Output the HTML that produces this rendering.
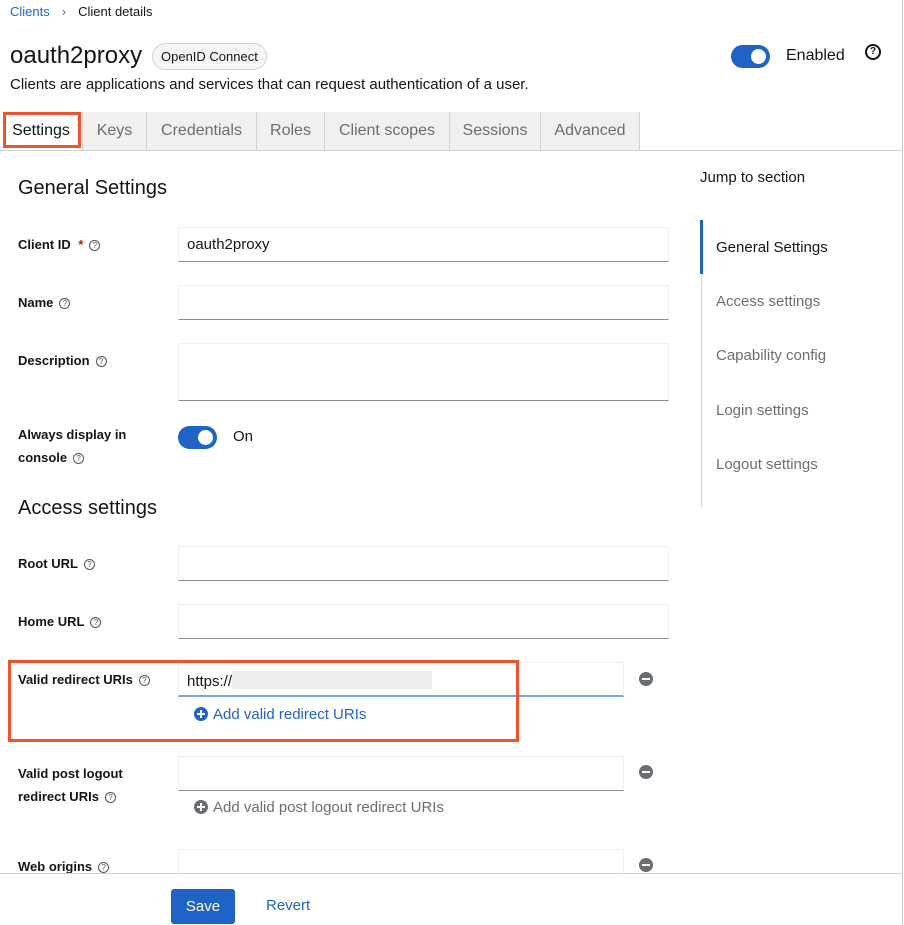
<!DOCTYPE html>
<html><head><style>
*{box-sizing:border-box}
body{margin:0;width:904px;height:925px;overflow:hidden;background:#fff;font-family:"Liberation Sans",sans-serif;color:#151515;position:relative}
.a{position:absolute}
.lbl{position:absolute;left:18px;font-size:13px;font-weight:bold;line-height:23px}
.q{display:inline-block;width:11px;height:11px;border:1px solid #555;border-radius:50%;font-size:8px;text-align:center;line-height:10px;font-weight:normal;margin-left:6px;vertical-align:1px;color:#555}
.in{position:absolute;left:178px;width:491px;height:35px;border:1px solid #f0f0f0;border-bottom:1px solid #8a8d90;font-size:15px;padding:8px}
.tab{position:absolute;top:112px;height:38px;font-size:16px;color:#6a6e73;text-align:center;line-height:38px;border-right:1px solid #d2d2d2;background:#f0f0f0}
.sw{position:absolute;width:39px;height:23px;border-radius:12px;background:#1f63c7}
.sw:after{content:"";position:absolute;right:4px;top:4px;width:15px;height:15px;border-radius:50%;background:#fff}
.nav{position:absolute;left:716px;font-size:15px;color:#6a6e73}
.minus{position:absolute;left:639px;width:14px;height:14px;border-radius:50%;background:#6a6e73}
.minus:after{content:"";position:absolute;left:3px;top:6px;width:8px;height:2px;background:#fff}
.plus{display:inline-block;width:14px;height:14px;border-radius:50%;position:relative;vertical-align:-2px;margin-right:5px}
.plus:before{content:"";position:absolute;left:3px;top:6px;width:8px;height:2px;background:#fff}
.plus:after{content:"";position:absolute;left:6px;top:3px;width:2px;height:8px;background:#fff}
</style></head><body>
<div class="a" style="right:1px;top:0;width:1px;height:925px;background:#c8c8c8"></div>
<div class="a" style="left:10px;top:4px;font-size:13px"><span style="color:#1f63c7">Clients</span><span style="color:#6a6e73;margin:0 12px">›</span>Client details</div>
<div class="a" style="left:10px;top:42px;font-size:24px">oauth2proxy</div>
<div class="a" style="left:152px;top:43px;height:27px;border:1px solid #d2d2d2;border-radius:14px;background:#f5f5f5;font-size:13px;line-height:25px;padding:0 8px">OpenID Connect</div>
<div class="a" style="left:10px;top:76px;font-size:15px">Clients are applications and services that can request authentication of a user.</div>
<div class="sw" style="left:731px;top:45px"></div>
<div class="a" style="left:786px;top:47px;font-size:16px">Enabled</div>
<div class="a" style="left:865px;top:44px;width:16px;height:16px;border:2px solid #151515;border-radius:50%;font-size:10px;font-weight:bold;text-align:center;line-height:12px">?</div>
<div class="a" style="left:0;top:112px;width:640px;height:38px;background:#f0f0f0"></div>
<div class="tab" style="left:0;width:83px;background:#fff;color:#151515">Settings</div>
<div class="tab" style="left:83px;width:64px">Keys</div>
<div class="tab" style="left:147px;width:110px">Credentials</div>
<div class="tab" style="left:257px;width:68px">Roles</div>
<div class="tab" style="left:325px;width:125px">Client scopes</div>
<div class="tab" style="left:450px;width:91px">Sessions</div>
<div class="tab" style="left:541px;width:99px">Advanced</div>
<div class="a" style="left:0;top:150px;width:902px;height:1px;background:#d2d2d2"></div>
<div class="a" style="left:3px;top:112px;width:78px;height:36px;border:3px solid #f0532f"></div>
<div class="a" style="left:18px;top:177px;font-size:20px">General Settings</div>
<div class="lbl" style="top:233px">Client ID <span style="color:#c9190b;margin-left:4px">*</span><span class="q">?</span></div>
<div class="in" style="top:227px">oauth2proxy</div>
<div class="lbl" style="top:291px">Name<span class="q">?</span></div>
<div class="in" style="top:285px"></div>
<div class="lbl" style="top:349px">Description<span class="q">?</span></div>
<div class="in" style="top:343px;height:58px"></div>
<div class="lbl" style="top:423px">Always display in<br>console<span class="q">?</span></div>
<div class="sw" style="left:178px;top:426px"></div>
<div class="a" style="left:233px;top:428px;font-size:15px">On</div>
<div class="a" style="left:18px;top:497px;font-size:20px">Access settings</div>
<div class="lbl" style="top:552px">Root URL<span class="q">?</span></div>
<div class="in" style="top:546px"></div>
<div class="lbl" style="top:610px">Home URL<span class="q">?</span></div>
<div class="in" style="top:604px"></div>
<div class="lbl" style="top:668px">Valid redirect URIs<span class="q">?</span></div>
<div class="in" style="top:662px;width:446px;border-bottom:2px solid #73a5e6">https://<span style="display:inline-block;width:200px;height:18px;background:#eee;vertical-align:-3px"></span></div>
<div class="minus" style="top:672px"></div>
<div class="a" style="left:194px;top:706px;font-size:15px;color:#1f63c7"><span class="plus" style="background:#1f63c7"></span>Add valid redirect URIs</div>
<div class="a" style="left:8px;top:660px;width:511px;height:82px;border:3px solid #f0532f"></div>
<div class="lbl" style="top:762px">Valid post logout<br>redirect URIs<span class="q">?</span></div>
<div class="in" style="top:756px;width:446px"></div>
<div class="minus" style="top:765px"></div>
<div class="a" style="left:194px;top:799px;font-size:15px;color:#6a6e73"><span class="plus" style="background:#6a6e73"></span>Add valid post logout redirect URIs</div>
<div class="lbl" style="top:855px">Web origins<span class="q">?</span></div>
<div class="in" style="top:849px;width:446px"></div>
<div class="minus" style="top:858px"></div>
<div class="a" style="left:0;top:873px;width:902px;height:52px;background:#fff;border-top:1px solid #d2d2d2"></div>
<div class="a" style="left:171px;top:889px;width:64px;height:35px;background:#1f63c7;border-radius:3px;color:#fff;font-size:15px;text-align:center;line-height:35px">Save</div>
<div class="a" style="left:266px;top:897px;font-size:15px;color:#1f63c7">Revert</div>
<div class="a" style="left:700px;top:169px;font-size:15px">Jump to section</div>
<div class="a" style="left:701px;top:220px;width:1px;height:287px;background:#d2d2d2"></div>
<div class="a" style="left:700px;top:220px;width:3px;height:54px;background:#1f63c7"></div>
<div class="nav" style="top:239px;color:#151515">General Settings</div>
<div class="nav" style="top:293px">Access settings</div>
<div class="nav" style="top:347px">Capability config</div>
<div class="nav" style="top:402px">Login settings</div>
<div class="nav" style="top:456px">Logout settings</div>
</body></html>
